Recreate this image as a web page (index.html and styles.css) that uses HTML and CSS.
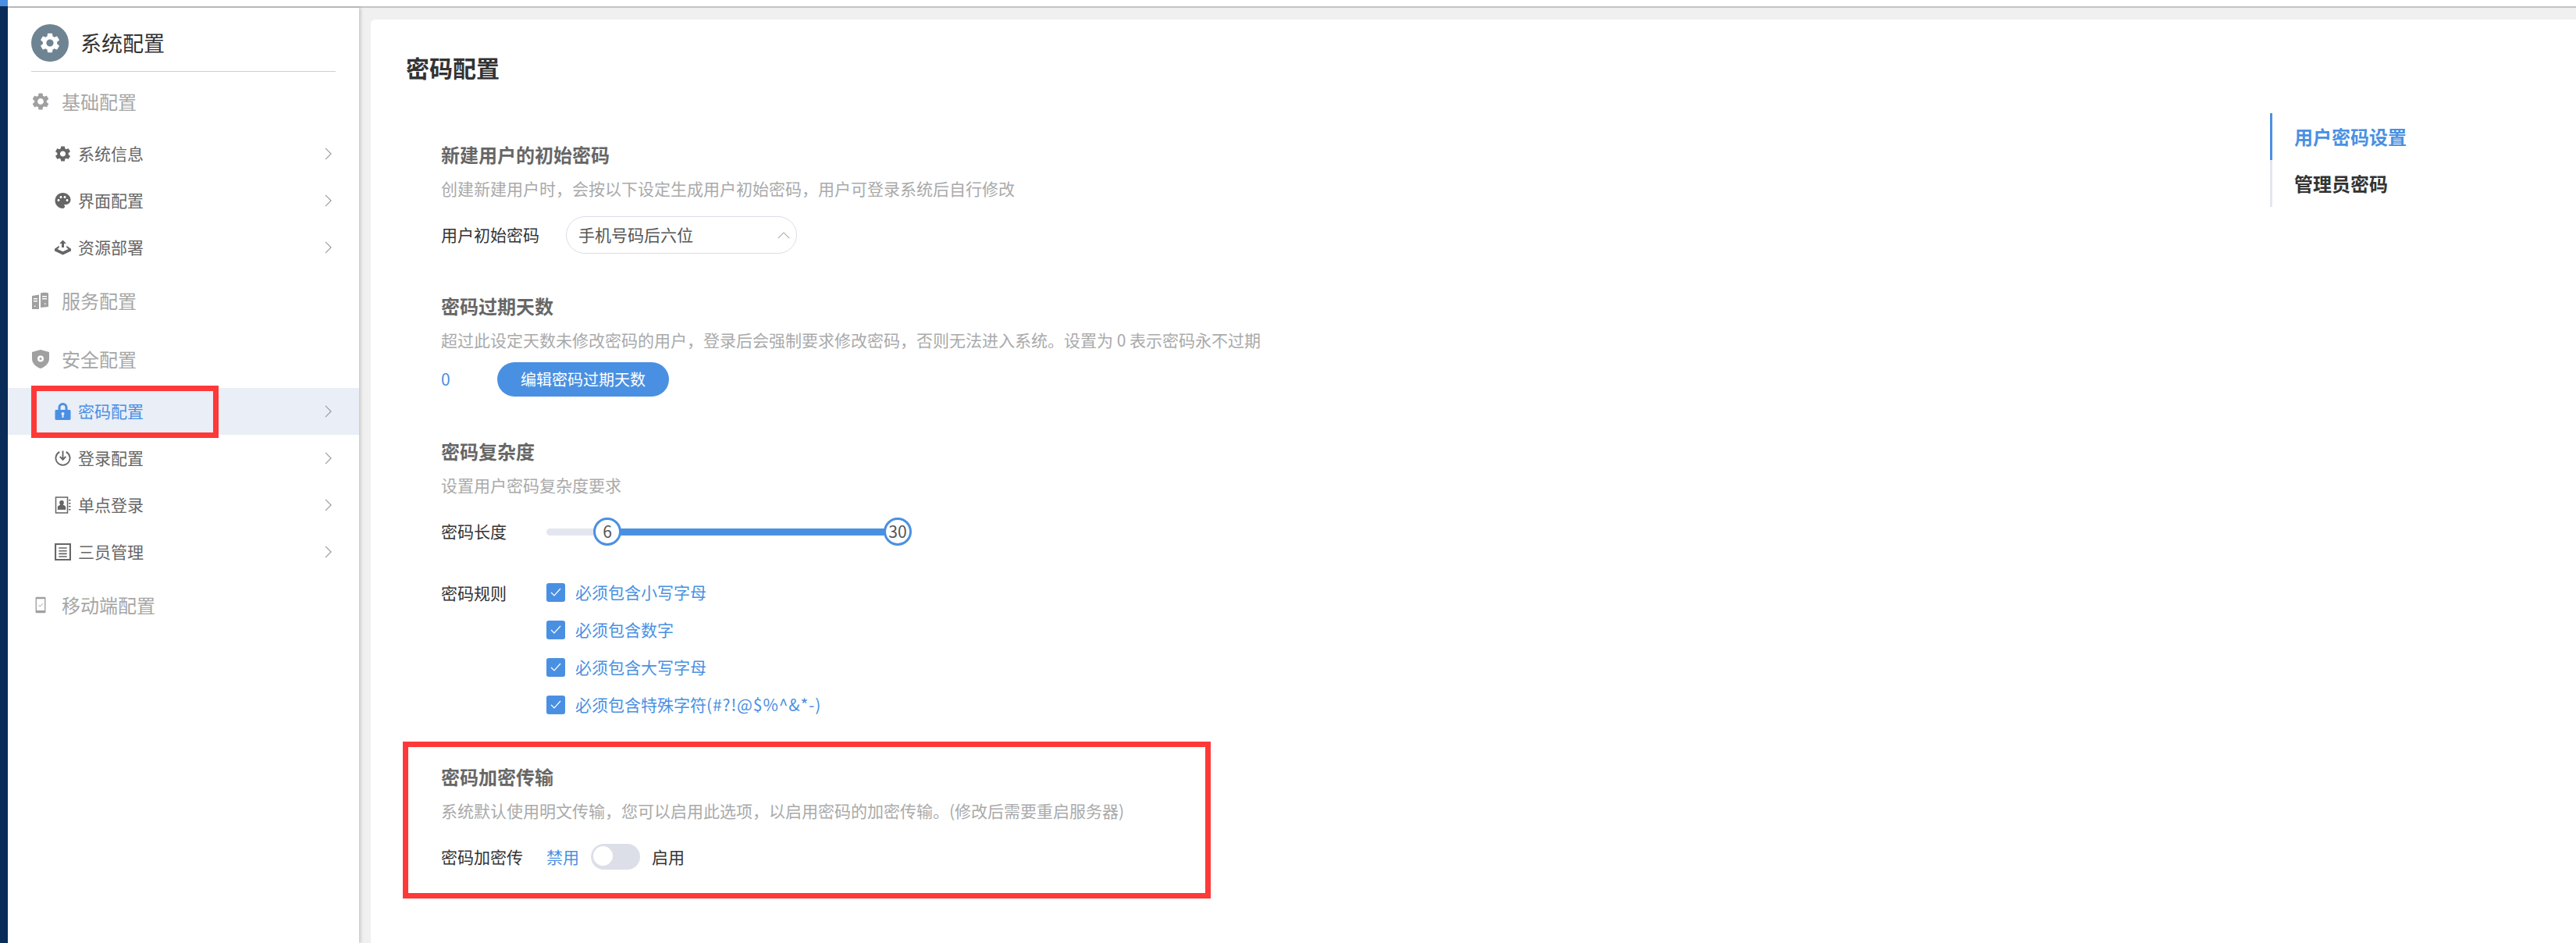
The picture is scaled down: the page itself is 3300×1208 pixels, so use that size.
FILE: index.html
```html
<!DOCTYPE html>
<html lang="zh-CN">
<head>
<meta charset="utf-8">
<title>密码配置</title>
<link rel="stylesheet" href="styles.css">
</head>
<body>
<svg class="defs" width="0" height="0" aria-hidden="true">
  <symbol id="i-gear" viewBox="2.4 1 19.2 22"><path fill="currentColor" fill-rule="evenodd" d="M19.14 12.94c.04-.3.06-.61.06-.94 0-.32-.02-.64-.07-.94l2.03-1.58a.49.49 0 0 0 .12-.61l-1.92-3.32a.488.488 0 0 0-.59-.22l-2.39.96c-.5-.38-1.03-.7-1.62-.94l-.36-2.54a.484.484 0 0 0-.48-.41h-3.84c-.24 0-.43.17-.47.41l-.36 2.54c-.59.24-1.13.57-1.62.94l-2.39-.96c-.22-.08-.47 0-.59.22L2.74 8.87c-.12.21-.08.47.12.61l2.03 1.58c-.05.3-.09.63-.09.94s.02.64.07.94l-2.03 1.58a.49.49 0 0 0-.12.61l1.92 3.32c.12.22.37.29.59.22l2.39-.96c.5.38 1.03.7 1.62.94l.36 2.54c.05.24.24.41.48.41h3.84c.24 0 .44-.17.47-.41l.36-2.54c.59-.24 1.13-.56 1.62-.94l2.39.96c.22.08.47 0 .59-.22l1.92-3.32c.12-.22.07-.47-.12-.61l-2.01-1.58zM12 15.6c-1.98 0-3.6-1.62-3.6-3.6s1.62-3.6 3.6-3.6 3.6 1.62 3.6 3.6-1.62 3.6-3.6 3.6z"/></symbol>
  <symbol id="i-palette" viewBox="2 1 20 22"><path fill="currentColor" d="M12 2C6.49 2 2 6.49 2 12s4.49 10 10 10c1.38 0 2.5-1.12 2.5-2.5 0-.61-.23-1.2-.64-1.67-.08-.1-.13-.21-.13-.33 0-.28.22-.5.5-.5H16c3.31 0 6-2.69 6-6 0-4.96-4.49-9-10-9zm5.5 11c-.83 0-1.5-.67-1.5-1.5s.67-1.5 1.5-1.5 1.5.67 1.5 1.5-.67 1.5-1.5 1.5zm-3-4c-.83 0-1.5-.67-1.5-1.5S13.67 6 14.5 6s1.5.67 1.5 1.5S15.33 9 14.5 9zM5 11.5c0-.83.67-1.5 1.5-1.5s1.5.67 1.5 1.5S7.33 13 6.5 13 5 12.33 5 11.5zm6-4c0 .83-.67 1.5-1.5 1.5S8 8.33 8 7.5 8.67 6 9.5 6s1.5.67 1.5 1.5z"/></symbol>
  <symbol id="i-deploy" viewBox="0 -1 22 22"><path fill="currentColor" d="M11 0l4.6 4.8h-3V10h-3.2V4.8h-3z"/><path fill="currentColor" fill-rule="evenodd" d="M6 7.6v2.6L3.6 12 11 15.6 18.400 12 16 10.200V7.600l6 4.200v3L11 20 0 14.800v-3z"/></symbol>
  <symbol id="i-server" viewBox="0 0 22 22"><path fill="currentColor" fill-rule="evenodd" d="M0 5l9-1.500V22H0zM2 8v1.500h5V8zm0 3v1.500h5V11zm1 6.500v1.500h1.500v-1.500zM11 1.500C13 .5 19 .5 21 1.500V19l-10 1zM13 5v1.500h6V5zm0 3v1.500h6V8zm3 6.500v1.500h1.500v-1.500z"/></symbol>
  <symbol id="i-shield" viewBox="0 0 22 24"><path fill="currentColor" fill-rule="evenodd" d="M11 0l11 3v8.500C22 17.500 17 22 11 24 5 22 0 17.500 0 11.500V3zm0 7.500a4 4 0 1 0 0 8 4 4 0 0 0 0-8zm0 2.500a1.500 1.500 0 1 1 0 3 1.500 1.500 0 0 1 0-3z"/></symbol>
  <symbol id="i-lock" viewBox="0 0 20 22"><path fill="currentColor" fill-rule="evenodd" d="M4 9V6a6 6 0 0 1 12 0v3h2.500c.8 0 1.500.7 1.500 1.500V20.500c0 .8-.7 1.500-1.500 1.500H1.500C.7 22 0 21.300 0 20.500V10.500C0 9.700.7 9 1.500 9zm3 0h6V6a3 3 0 0 0-6 0zm3 3a2 2 0 0 0-1 3.700V19h2v-3.300A2 2 0 0 0 10 12z"/></symbol>
  <symbol id="i-login" viewBox="0 0 20 20"><path fill="none" stroke="currentColor" stroke-width="1.800" d="M6 2.200a8.600 8.600 0 1 0 8 0"/><path fill="none" stroke="currentColor" stroke-width="1.800" d="M10 1v10.500M6.400 8l3.600 3.800L13.600 8"/></symbol>
  <symbol id="i-contact" viewBox="0 0 20 22"><path fill="none" stroke="currentColor" stroke-width="1.500" d="M1 1h15v20H1z"/><path fill="currentColor" d="M8.500 5a2.800 2.800 0 0 1 2.800 3c0 1.200-.5 2.200-1.200 2.800 2 .6 3.600 1.500 3.600 3V17H3.300v-3.200c0-1.500 1.600-2.400 3.600-3C6.200 10.200 5.700 9.200 5.700 8a2.800 2.800 0 0 1 2.800-3zM17.500 4H20v1.500h-2.500zm0 4H20v1.500h-2.500zm0 4H20v1.500h-2.500zm0 4H20v1.500h-2.500z"/></symbol>
  <symbol id="i-doc" viewBox="0 0 20 21"><path fill="currentColor" fill-rule="evenodd" d="M0 0h20v21H0zm2 2v17h16V2zm3 3h10v1.500H5zm0 3.500h10V10H5zM5 12h10v1.500H5zm0 3.500h10V17H5z"/></symbol>
  <symbol id="i-phone" viewBox="-2 -2 18 26"><path fill="currentColor" fill-rule="evenodd" d="M1 0h12c.6 0 1 .4 1 1v20c0 .6-.4 1-1 1H1c-.6 0-1-.4-1-1V1c0-.6.4-1 1-1zm.5 2.500v16h11v-16z"/><path fill="none" stroke="currentColor" stroke-width="1" d="M4 11l2.200 2.200L10 9"/></symbol>
  <symbol id="i-right" viewBox="0 0 10 18"><path fill="none" stroke="currentColor" stroke-width="1.300" d="M1 1l8 8-8 8"/></symbol>
  <symbol id="i-up" viewBox="0 0 18 10"><path fill="none" stroke="currentColor" stroke-width="1.300" d="M1 9l8-8 8 8"/></symbol>
  <symbol id="i-tick" viewBox="0 0 14 12"><path fill="none" stroke="currentColor" stroke-width="1.200" d="M1 6l4 4 8-9"/></symbol>
</svg>

<div class="app">
  <div class="edge"><div class="edge-top"></div></div>
  <div class="shell">
    <div class="topbar"></div>
    <div class="workspace">
      <aside class="sidebar">
        <div class="side-head">
          <span class="head-badge"><svg class="head-gear"><use href="#i-gear"/></svg></span>
          <span class="head-title">系统配置</span>
        </div>
        <div class="group"><svg class="group-icon"><use href="#i-gear"/></svg><span class="group-text">基础配置</span></div>
        <div class="item"><svg class="item-icon"><use href="#i-gear"/></svg><span class="item-text">系统信息</span><svg class="chev"><use href="#i-right"/></svg></div>
        <div class="item"><svg class="item-icon"><use href="#i-palette"/></svg><span class="item-text">界面配置</span><svg class="chev"><use href="#i-right"/></svg></div>
        <div class="item"><svg class="item-icon"><use href="#i-deploy"/></svg><span class="item-text">资源部署</span><svg class="chev"><use href="#i-right"/></svg></div>
        <div class="group"><svg class="group-icon"><use href="#i-server"/></svg><span class="group-text">服务配置</span></div>
        <div class="group"><svg class="group-icon"><use href="#i-shield"/></svg><span class="group-text">安全配置</span></div>
        <div class="item item-active"><svg class="item-icon"><use href="#i-lock"/></svg><span class="item-text">密码配置</span><svg class="chev"><use href="#i-right"/></svg></div>
        <div class="item"><svg class="item-icon"><use href="#i-login"/></svg><span class="item-text">登录配置</span><svg class="chev"><use href="#i-right"/></svg></div>
        <div class="item"><svg class="item-icon"><use href="#i-contact"/></svg><span class="item-text">单点登录</span><svg class="chev"><use href="#i-right"/></svg></div>
        <div class="item"><svg class="item-icon"><use href="#i-doc"/></svg><span class="item-text">三员管理</span><svg class="chev"><use href="#i-right"/></svg></div>
        <div class="group"><svg class="group-icon"><use href="#i-phone"/></svg><span class="group-text">移动端配置</span></div>
        <div class="mark mark-menu"></div>
      </aside>

      <main class="content">
        <div class="panel">
          <div class="form">
            <h1 class="page-title">密码配置</h1>

            <section class="sec sec-initial">
              <h3 class="sec-title">新建用户的初始密码</h3>
              <p class="sec-desc">创建新建用户时，会按以下设定生成用户初始密码，用户可登录系统后自行修改</p>
              <div class="row row-initial">
                <span class="label label-wide">用户初始密码</span>
                <div class="select"><span class="txt">手机号码后六位</span><svg class="select-arrow"><use href="#i-up"/></svg></div>
              </div>
            </section>

            <section class="sec sec-expire">
              <h3 class="sec-title">密码过期天数</h3>
              <p class="sec-desc">超过此设定天数未修改密码的用户，登录后会强制要求修改密码，否则无法进入系统。设置为 0 表示密码永不过期</p>
              <div class="row row-expire">
                <span class="days txt">0</span>
                <button class="btn" type="button">编辑密码过期天数</button>
              </div>
            </section>

            <section class="sec sec-complex">
              <h3 class="sec-title">密码复杂度</h3>
              <p class="sec-desc">设置用户密码复杂度要求</p>
              <div class="row row-slider">
                <span class="label">密码长度</span>
                <div class="slider">
                  <div class="slider-fill"></div>
                  <span class="handle handle-min">6</span>
                  <span class="handle handle-max">30</span>
                </div>
              </div>
              <div class="row row-rules">
                <span class="label label-rules">密码规则</span>
                <div class="rules">
                  <div class="rule"><span class="check"><svg class="tick"><use href="#i-tick"/></svg></span><span class="txt">必须包含小写字母</span></div>
                  <div class="rule"><span class="check"><svg class="tick"><use href="#i-tick"/></svg></span><span class="txt">必须包含数字</span></div>
                  <div class="rule"><span class="check"><svg class="tick"><use href="#i-tick"/></svg></span><span class="txt">必须包含大写字母</span></div>
                  <div class="rule"><span class="check"><svg class="tick"><use href="#i-tick"/></svg></span><span class="txt">必须包含特殊字符<span class="rule-ascii">(#?!@$%^&amp;*-)</span></span></div>
                </div>
              </div>
            </section>

            <section class="sec sec-transport">
              <h3 class="sec-title">密码加密传输</h3>
              <p class="sec-desc">系统默认使用明文传输，您可以启用此选项，以启用密码的加密传输。(修改后需要重启服务器)</p>
              <div class="row row-toggle">
                <span class="label">密码加密传</span>
                <span class="off txt">禁用</span>
                <span class="switch"><span class="knob"></span></span>
                <span class="on txt">启用</span>
              </div>
            </section>
          </div>

          <nav class="anchor">
            <div class="anchor-item anchor-current">用户密码设置</div>
            <div class="anchor-item">管理员密码</div>
          </nav>
          <div class="mark mark-form"></div>
        </div>
      </main>
    </div>
  </div>
</div>
</body>
</html>
```
FILE: styles.css
```css
* { box-sizing: border-box; }
html, body { margin: 0; padding: 0; height: 100%; }
body {
  font-family: "Noto Sans CJK SC", "Liberation Sans", sans-serif;
  font-size: 21px;
  color: #333;
  background: #fff;
  overflow: hidden;
}
.defs { position: absolute; }
.txt { padding-bottom: 2px; }

.app { display: flex; height: 1208px; }
.edge { width: 10px; background: #0a2c58; flex: none; }
.edge-top { height: 8px; background: #4a90e2; }
.shell { flex: 1; display: flex; flex-direction: column; min-width: 0; }
.topbar { height: 10px; background: #fff; border-bottom: 2px solid #c4c4c4; flex: none; }
.workspace { flex: 1; display: flex; min-height: 0; }

/* sidebar */
.sidebar {
  position: relative;
  z-index: 1;
  width: 450px;
  flex: none;
  background: #fff;
  box-shadow: 2px 0 4px rgba(0, 0, 0, .18);
}
.side-head {
  height: 82px;
  margin: 0 30px;
  padding-top: 21px;
  display: flex;
  align-items: flex-start;
  border-bottom: 1px solid #cfcfcf;
}
.head-badge {
  width: 48px;
  height: 48px;
  border-radius: 50%;
  background: #6e8492;
  color: #fff;
  display: flex;
  align-items: center;
  justify-content: center;
  flex: none;
}
.head-gear { width: 28px; height: 28px; }
.head-title { margin-left: 15px; font-size: 27px; line-height: 48px; color: #333; }

.group {
  height: 75px;
  padding-left: 31px;
  display: flex;
  align-items: center;
  font-size: 24px;
  color: #a6a6a6;
}
.group-icon { width: 22px; height: 24px; margin-right: 16px; flex: none; color: #a0a0a0; }
.group-text { padding-bottom: 1px; }

.item {
  height: 60px;
  padding-left: 60px;
  padding-right: 35px;
  display: flex;
  align-items: center;
  color: #666;
}
.item-icon { width: 21px; height: 22px; margin-right: 9px; flex: none; color: #666; }
.item-text { flex: 1; padding-bottom: 2px; }
.chev { width: 9px; height: 16px; color: #999; flex: none; }
.item-active { background: #e9eef7; color: #4a90e2; }
.item-active .item-icon { color: #4a90e2; }

.mark { position: absolute; border: 7px solid #ff3838; pointer-events: none; }
.mark-menu { left: 30px; top: 484px; width: 240px; height: 67px; }
.mark-form { left: 41px; top: 925px; width: 1035px; height: 201px; }

/* content */
.content { flex: 1; min-width: 0; background: #f0f0f0; padding: 15px 0 0 15px; }
.panel {
  position: relative;
  height: 100%;
  background: #fff;
  border-top-left-radius: 6px;
  display: flex;
  justify-content: space-between;
}
.form { padding: 42px 0 0 45px; }
.page-title { margin: 0; font-size: 30px; line-height: 38px; font-weight: 700; color: #333; }

.sec { padding-left: 45px; }
.sec-initial { margin-top: 77px; }
.sec-expire { margin-top: 51px; }
.sec-complex { margin-top: 54px; }
.sec-transport { margin-top: 52px; }
.sec-title { margin: 0 0 13px; font-size: 24px; line-height: 32px; font-weight: 700; color: #666; }
.sec-desc { margin: 0; padding-bottom: 2px; line-height: 28px; color: #aaa; white-space: nowrap; }

.row { display: flex; align-items: center; }
.label { width: 135px; flex: none; padding-bottom: 2px; color: #333; }
.label-wide { width: 160px; }

.row-initial { margin-top: 20px; }
.select {
  width: 296px;
  height: 48px;
  padding: 0 8px 0 15px;
  border: 1.500px solid #dcdee8;
  border-radius: 24px;
  display: flex;
  align-items: center;
  justify-content: space-between;
  color: #555;
}
.select-arrow { width: 16px; height: 9px; color: #aaa; }

.row-expire { margin-top: 13px; }
.days { width: 72px; flex: none; color: #4a90e2; }
.btn {
  height: 44px;
  width: 220px;
  padding: 0 0 2px;
  border: 0;
  border-radius: 22px;
  background: #4a90e2;
  color: #fff;
  font: inherit;
  font-size: 20px;
}

.row-slider { margin-top: 26px; height: 36px; }
.slider { position: relative; width: 450px; height: 9px; background: #e3e6ee; border-radius: 5px; }
.slider-fill { position: absolute; left: 78px; right: 0; top: 0; bottom: 0; background: #4a90e2; }
.handle {
  position: absolute;
  top: -14px;
  width: 36px;
  height: 36px;
  padding-bottom: 2px;
  border: 3px solid #4a90e2;
  border-radius: 50%;
  background: #fff;
  color: #555;
  display: flex;
  align-items: center;
  justify-content: center;
}
.handle-min { left: 60px; }
.handle-max { left: 432px; }

.row-rules { margin-top: 36px; align-items: flex-start; }
.label-rules { line-height: 48px; }
.rules { display: flex; flex-direction: column; }
.rule { height: 48px; display: flex; align-items: center; color: #4a90e2; white-space: nowrap; }
.rule-ascii { letter-spacing: .9px; }
.check {
  width: 24px;
  height: 24px;
  margin-right: 13px;
  border-radius: 3px;
  background: #4a90e2;
  color: #fff;
  display: flex;
  align-items: center;
  justify-content: center;
  flex: none;
}
.tick { width: 14px; height: 12px; }

.row-toggle { margin-top: 27px; height: 33px; }
.off { color: #4a90e2; }
.switch {
  width: 63px;
  height: 33px;
  margin: 0 15px;
  padding: 3px;
  border-radius: 17px;
  background: #dcdfe8;
  display: flex;
  flex: none;
}
.knob { width: 25px; height: 25px; border-radius: 50%; background: #fff; }
.on { color: #333; }

/* right anchor */
.anchor { width: 392px; flex: none; margin-top: 120px; align-self: flex-start; }
.anchor-item {
  height: 60px;
  padding-left: 28px;
  border-left: 3px solid #e3e6f0;
  font-size: 24px;
  font-weight: 700;
  line-height: 60px;
  color: #333;
}
.anchor-current { border-left-color: #4a90e2; color: #4a90e2; }
```
